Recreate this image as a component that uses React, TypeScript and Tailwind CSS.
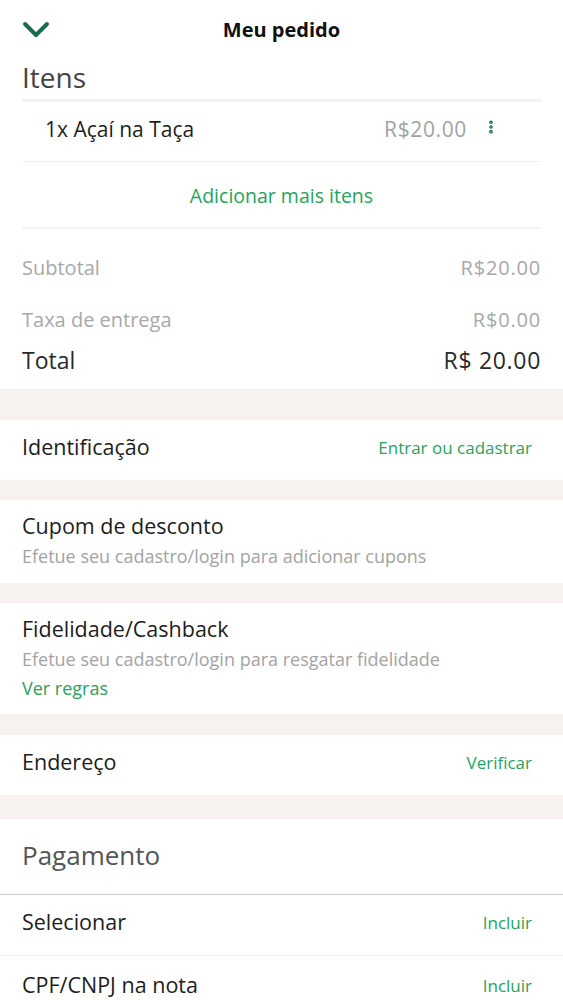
import { MoreVertical } from "lucide-react";

const font = { fontFamily: "'Open Sans', 'Noto Sans', sans-serif" };

function Band({ h }: { h: string }) {
  return <div className={`bg-[#f7f2ef] ${h}`} />;
}

function ActionRow({ label, action }: { label: string; action: string }) {
  return (
    <div className="flex items-center justify-between px-[22px] h-[60px] pb-[5px]">
      <span className="text-[21.5px] text-[#1d1d1d]">{label}</span>
      <span className="text-[17px] text-[#27a25f] pr-[9px]">{action}</span>
    </div>
  );
}

export default function App() {
  return (
    <div className="w-[563px] h-[1000px] overflow-hidden bg-white" style={font}>
      {/* Header */}
      <div className="relative flex items-center justify-center h-[60px]">
        <svg className="absolute left-[22px] top-[21px]" width="28" height="18" viewBox="0 0 28 18">
          <path d="M3 3 L14 14 L25 3" fill="none" stroke="#1a6b4a" strokeWidth="4" strokeLinecap="round" strokeLinejoin="round" />
        </svg>
        <h1 className="text-[20px] font-bold text-[#111]">Meu pedido</h1>
      </div>

      {/* Itens */}
      <div className="px-[22px]">
        <h2 className="text-[28px] text-[#444] leading-[36px] pb-[4px] -mt-[1px]">Itens</h2>
        <div className="h-[3px] bg-[#f4f4f4]" />
        <div className="flex items-center h-[60px] pl-[23px] border-b border-[#f0f0f0]">
          <span className="flex-1 text-[21px] text-[#1d1d1d] -mt-[3px]">1x Açaí na Taça</span>
          <span className="text-[21px] tracking-[0.03em] text-[#a3a3a3] -mt-[3px]">R$20.00</span>
          <MoreVertical className="ml-[16px] mr-[42px] -mt-[10px] text-[#1a6b4a]" size={16} strokeWidth={3.5} />
        </div>
        <div className="flex items-center justify-center h-[67px] border-b-[2px] border-[#f4f4f4] pt-[3px]">
          <span className="text-[19.5px] text-[#27a25f]">Adicionar mais itens</span>
        </div>
        <div className="pt-[22px] pb-[12px]">
          <div className="flex justify-between h-[34px] items-center text-[20px] text-[#a8a8a8]">
            <span>Subtotal</span>
            <span className="tracking-[0.04em]">R$20.00</span>
          </div>
          <div className="flex justify-between h-[34px] items-center mt-[18px] text-[20px] text-[#a8a8a8]">
            <span>Taxa de entrega</span>
            <span className="tracking-[0.04em]">R$0.00</span>
          </div>
          <div className="flex justify-between h-[34px] items-center mt-[6px] text-[23px] text-[#2a2a2a]">
            <span>Total</span>
            <span className="tracking-[0.03em]">R$ 20.00</span>
          </div>
        </div>
      </div>

      <Band h="h-[31px]" />
      <ActionRow label="Identificação" action="Entrar ou cadastrar" />
      <Band h="h-[20px]" />

      <div className="px-[22px] h-[83px] pt-[10px]">
        <div className="text-[21.5px] text-[#1d1d1d] leading-[32px]">Cupom de desconto</div>
        <div className="text-[18px] text-[#a3a3a3] leading-[28px]">Efetue seu cadastro/login para adicionar cupons</div>
      </div>
      <Band h="h-[20px]" />

      <div className="px-[22px] h-[111px] pt-[10px]">
        <div className="text-[21.5px] text-[#1d1d1d] leading-[32px]">Fidelidade/Cashback</div>
        <div className="text-[18px] text-[#a3a3a3] leading-[28px]">Efetue seu cadastro/login para resgatar fidelidade</div>
        <div className="text-[18px] text-[#27a25f] leading-[30px]">Ver regras</div>
      </div>
      <Band h="h-[21px]" />

      <ActionRow label="Endereço" action="Verificar" />
      <Band h="h-[24px]" />

      <div className="flex items-center px-[22px] h-[76px] border-b border-[#cfcfcf] pb-[2px]">
        <span className="text-[26px] text-[#555]">Pagamento</span>
      </div>
      <div className="border-b border-[#f0f0f0]">
        <ActionRow label="Selecionar" action="Incluir" />
      </div>
      <div className="pt-[2px]">
        <ActionRow label="CPF/CNPJ na nota" action="Incluir" />
      </div>
    </div>
  );
}
